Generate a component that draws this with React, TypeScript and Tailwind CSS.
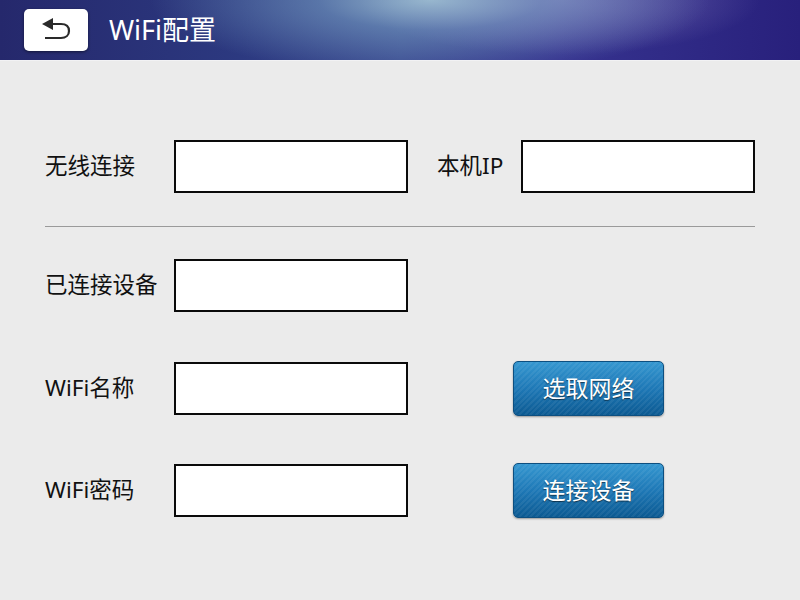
import React from "react";

const font = { fontFamily: '"Noto Sans", "Noto Sans CJK SC", sans-serif' };

function Field() {
  return <div className="w-[234px] h-[53px] border-2 border-[#0a0a0a] bg-white shrink-0" />;
}

function BlueButton({ text }: { text: string }) {
  return (
    <button
      className="ml-[105px] w-[151px] h-[55px] rounded-[5px] border border-[#0d4f80] text-white text-[23px] shadow-[0_1px_2px_rgba(0,0,0,0.35)] flex items-center justify-center"
      style={{
        ...font,
        backgroundImage:
          "repeating-linear-gradient(135deg, rgba(255,255,255,0.06) 0px, rgba(255,255,255,0.06) 2px, rgba(0,0,0,0) 2px, rgba(0,0,0,0) 4px), linear-gradient(to bottom, #3597d0 0%, #1e78b6 50%, #0c5a92 100%)",
        textShadow: "0 1px 1px rgba(0,0,0,0.55)",
      }}
    >
      {text}
    </button>
  );
}

function Label({ children, w = "w-[129px]" }: { children: React.ReactNode; w?: string }) {
  return <div className={`${w} shrink-0 text-[22.5px] text-[#111] leading-none`}>{children}</div>;
}

export default function App() {
  return (
    <div className="w-[800px] h-[600px] bg-[#ebebeb] overflow-hidden" style={font}>
      <div
        className="h-[61px] flex items-center border-b border-[#f2f2f4]"
        style={{
          backgroundImage:
            "radial-gradient(ellipse 280px 75px at 430px 0px, rgba(165,200,215,0.85) 0%, rgba(120,160,195,0.55) 40%, rgba(80,100,170,0) 100%), radial-gradient(ellipse 200px 55px at 560px 0px, rgba(160,150,205,0.55) 0%, rgba(120,110,190,0) 100%), linear-gradient(to right, #25286c 0%, #2c3980 30%, #3a4a90 50%, #36338f 70%, #28207c 100%)",
        }}
      >
        <div className="ml-[24px] w-[64px] h-[42px] rounded-[5px] bg-white shadow-[0_1px_3px_rgba(0,0,0,0.5)] flex items-center justify-center">
          <svg width="34" height="28" viewBox="0 0 34 28">
            <path d="M3 8 L14 2 L14 14 Z" fill="#2a2a2a" />
            <path d="M13 8 H22 C29 8 30 12 30 15 C30 19 27 22 22 22 H6" fill="none" stroke="#2a2a2a" strokeWidth="2.2" />
          </svg>
        </div>
        <div className="ml-[21px] text-white text-[27px] leading-none pb-[2px]">WiFi配置</div>
      </div>

      <div className="px-[45px]">
        <div className="mt-[79px] flex items-center">
          <Label>无线连接</Label>
          <Field />
          <Label w="w-[84px] ml-[29px]">本机IP</Label>
          <Field />
        </div>
        <div className="mt-[33px] h-px w-[710px] bg-[#9a9a9a]" />
        <div className="mt-[32px] flex items-center">
          <Label>已连接设备</Label>
          <Field />
        </div>
        <div className="mt-[49px] flex items-center">
          <Label>WiFi名称</Label>
          <Field />
          <BlueButton text="选取网络" />
        </div>
        <div className="mt-[47px] flex items-center">
          <Label>WiFi密码</Label>
          <Field />
          <BlueButton text="连接设备" />
        </div>
      </div>
    </div>
  );
}
